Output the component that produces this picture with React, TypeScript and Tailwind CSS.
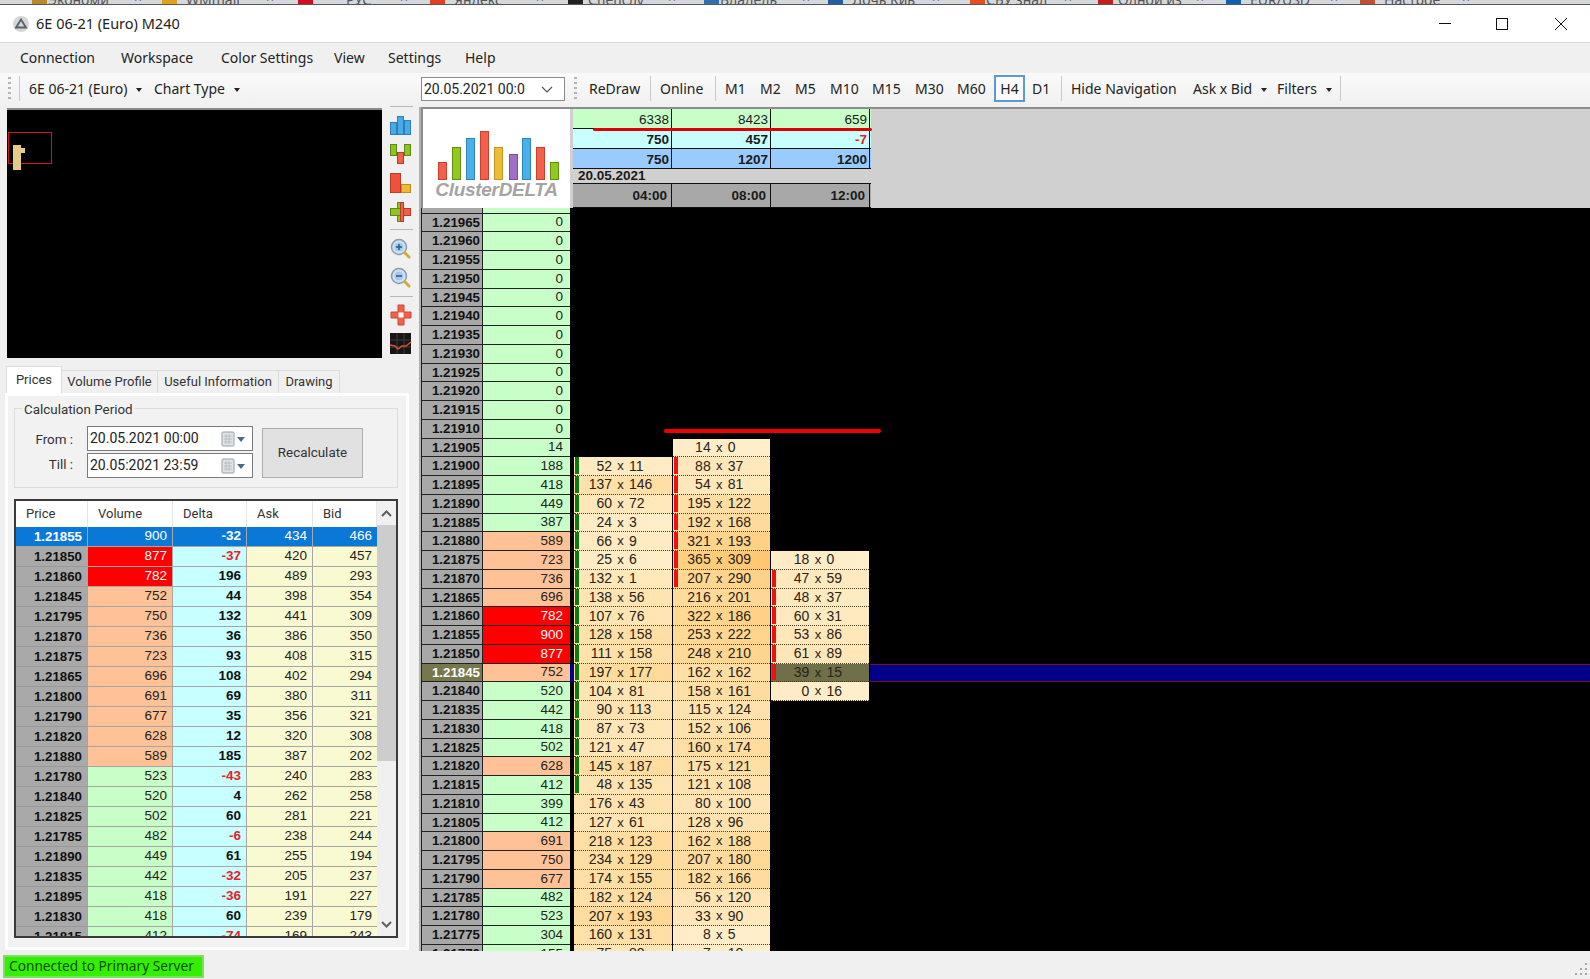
import { ReactNode } from 'react'

const SANS = "font-['Noto_Sans',sans-serif]"
const ROBOTO = "font-['Roboto',sans-serif]"
const ARIAL = "font-['Liberation_Sans',Arial,sans-serif]"

// Browser tabs peeking out above the window: icon x, label x, close x, label, icon colour
const BROWSER_TABS: [number, number, number, string, string][] = [
  [32, 48, 134, 'Экономи', '#b58a2a'],
  [162, 186, 266, 'WMmail', '#e0a020'],
  [298, 346, 400, 'РУС', '#d01020'],
  [430, 454, 536, 'Яндекс', '#e04020'],
  [568, 588, 668, 'Спецслу', '#222222'],
  [704, 720, 802, 'Владель', '#3070b0'],
  [828, 852, 932, 'Дочь Кив', '#2060a0'],
  [970, 986, 1064, 'СБУ знал', '#e05020'],
  [1098, 1118, 1196, 'Одной из', '#c02020'],
  [1226, 1250, 1330, 'EUR/USD', '#1060b0'],
  [1360, 1384, 1462, 'Настрое', '#c05030'],
]

// Grid on the Prices tab: price, volume, delta, ask, bid
const PRICE_ROWS: [string, number, number, number, number][] = [
  ['1.21855', 900, -32, 434, 466],
  ['1.21850', 877, -37, 420, 457],
  ['1.21860', 782, 196, 489, 293],
  ['1.21845', 752, 44, 398, 354],
  ['1.21795', 750, 132, 441, 309],
  ['1.21870', 736, 36, 386, 350],
  ['1.21875', 723, 93, 408, 315],
  ['1.21865', 696, 108, 402, 294],
  ['1.21800', 691, 69, 380, 311],
  ['1.21790', 677, 35, 356, 321],
  ['1.21820', 628, 12, 320, 308],
  ['1.21880', 589, 185, 387, 202],
  ['1.21780', 523, -43, 240, 283],
  ['1.21840', 520, 4, 262, 258],
  ['1.21825', 502, 60, 281, 221],
  ['1.21785', 482, -6, 238, 244],
  ['1.21890', 449, 61, 255, 194],
  ['1.21835', 442, -32, 205, 237],
  ['1.21895', 418, -36, 191, 227],
  ['1.21830', 418, 60, 239, 179],
  ['1.21815', 412, -74, 169, 243],
]

type Cluster = [number, number] | null

// Footprint ladder: price, total volume, three H4 columns
const LADDER: [string, number, Cluster, Cluster, Cluster][] = [
  ['1.21965', 0, null, null, null],
  ['1.21960', 0, null, null, null],
  ['1.21955', 0, null, null, null],
  ['1.21950', 0, null, null, null],
  ['1.21945', 0, null, null, null],
  ['1.21940', 0, null, null, null],
  ['1.21935', 0, null, null, null],
  ['1.21930', 0, null, null, null],
  ['1.21925', 0, null, null, null],
  ['1.21920', 0, null, null, null],
  ['1.21915', 0, null, null, null],
  ['1.21910', 0, null, null, null],
  ['1.21905', 14, null, [14, 0], null],
  ['1.21900', 188, [52, 11], [88, 37], null],
  ['1.21895', 418, [137, 146], [54, 81], null],
  ['1.21890', 449, [60, 72], [195, 122], null],
  ['1.21885', 387, [24, 3], [192, 168], null],
  ['1.21880', 589, [66, 9], [321, 193], null],
  ['1.21875', 723, [25, 6], [365, 309], [18, 0]],
  ['1.21870', 736, [132, 1], [207, 290], [47, 59]],
  ['1.21865', 696, [138, 56], [216, 201], [48, 37]],
  ['1.21860', 782, [107, 76], [322, 186], [60, 31]],
  ['1.21855', 900, [128, 158], [253, 222], [53, 86]],
  ['1.21850', 877, [111, 158], [248, 210], [61, 89]],
  ['1.21845', 752, [197, 177], [162, 162], [39, 15]],
  ['1.21840', 520, [104, 81], [158, 161], [0, 16]],
  ['1.21835', 442, [90, 113], [115, 124], null],
  ['1.21830', 418, [87, 73], [152, 106], null],
  ['1.21825', 502, [121, 47], [160, 174], null],
  ['1.21820', 628, [145, 187], [175, 121], null],
  ['1.21815', 412, [48, 135], [121, 108], null],
  ['1.21810', 399, [176, 43], [80, 100], null],
  ['1.21805', 412, [127, 61], [128, 96], null],
  ['1.21800', 691, [218, 123], [162, 188], null],
  ['1.21795', 750, [234, 129], [207, 180], null],
  ['1.21790', 677, [174, 155], [182, 166], null],
  ['1.21785', 482, [182, 124], [56, 120], null],
  ['1.21780', 523, [207, 193], [33, 90], null],
  ['1.21775', 304, [160, 131], [8, 5], null],
  ['1.21770', 155, [75, 80], [7, 10], null],
]

const CURRENT_PRICE = '1.21845'

function volumeBg(volume: number) {
  if (volume >= 770) return 'bg-[#ff0000] text-white'
  if (volume >= 580) return 'bg-[#ffc297] text-[#222]'
  return 'bg-[#c8ffc8] text-[#222]'
}

/** Cell tint grows with the traded volume, like the terminal's own shading. */
function clusterShade([ask, bid]: [number, number]) {
  const t = Math.min(1, (ask + bid) / 680)
  const g = Math.round(240 - 42 * t)
  const b = Math.round(205 - 95 * t)
  const g2 = Math.round(236 - 26 * t)
  const b2 = Math.round(200 - 70 * t)
  return `linear-gradient(90deg, rgb(255,${g2},${b2}), rgb(255,${g},${b}))`
}

function Caret() {
  return <span className="ml-[9px] inline-block h-0 w-0 border-x-[3.5px] border-t-[4px] border-x-transparent border-t-[#222] align-middle" />
}

function ToolSep({ className = '' }: { className?: string }) {
  return <div className={`h-[25px] w-px bg-[#c8c8c8] ${className}`} />
}

function Grip({ className = '' }: { className?: string }) {
  return (
    <div className={`flex h-[22px] w-[3px] flex-col justify-between ${className}`}>
      {[0, 1, 2, 3, 4].map((i) => (
        <span key={i} className="h-[2px] w-[3px] bg-[#b4b4b4]" />
      ))}
    </div>
  )
}

function ToolText({ w, children, className = '' }: { w: string; children: ReactNode; className?: string }) {
  return <span className={`shrink-0 whitespace-nowrap ${w} ${className}`}>{children}</span>
}

/** Bars in the vertical icon strip; each is a small coloured candle. */
function Bar({ x, y, w, h, c, b }: { x: number; y: number; w: number; h: number; c: string; b: string }) {
  return <rect x={x} y={y} width={w} height={h} fill={c} stroke={b} strokeWidth="1" />
}

function SideIcon({ children }: { children: ReactNode }) {
  return (
    <svg width="24" height="22" viewBox="0 0 24 22" className="shrink-0">
      {children}
    </svg>
  )
}

function Magnifier({ plus }: { plus: boolean }) {
  return (
    <SideIcon>
      <circle cx="10" cy="9" r="7.5" fill="#cfe2f3" stroke="#8a9aa8" strokeWidth="1.5" />
      <circle cx="10" cy="9" r="4.5" fill="#a6c8ea" />
      <rect x="7" y="8.2" width="6" height="1.6" fill="#2d5f9a" />
      {plus && <rect x="9.2" y="6" width="1.6" height="6" fill="#2d5f9a" />}
      <line x1="16" y1="15" x2="20" y2="19" stroke="#d9a93c" strokeWidth="3" strokeLinecap="round" />
    </SideIcon>
  )
}

function SideIcons() {
  return (
    <div className="-mt-[2px] flex h-full w-[38px] shrink-0 flex-col items-center">
      <div className="h-px w-[23px] bg-[#b8b8b8]" />
      <div className="mt-[7px] flex flex-col items-center gap-[7px]">
        <SideIcon>
          <Bar x={1.5} y={8.5} w={6} h={12} c="#45ace8" b="#2d7fb8" />
          <Bar x={8.5} y={2.5} w={6} h={18} c="#45ace8" b="#2d7fb8" />
          <Bar x={15.5} y={6.5} w={6} h={14} c="#45ace8" b="#2d7fb8" />
        </SideIcon>
        <SideIcon>
          <Bar x={1.5} y={1.5} w={6} h={11} c="#8fc31f" b="#5f8a12" />
          <Bar x={15.5} y={1.5} w={6} h={11} c="#8fc31f" b="#5f8a12" />
          <Bar x={8.5} y={9.5} w={6} h={11} c="#f0604a" b="#b83c2a" />
        </SideIcon>
        <SideIcon>
          <Bar x={1.5} y={1.5} w={10} h={19} c="#f0503c" b="#b83c2a" />
          <Bar x={12.5} y={12.5} w={9} h={8} c="#eebb33" b="#b88f20" />
        </SideIcon>
        <SideIcon>
          <Bar x={8.5} y={1.5} w={6} h={19} c="#8fc31f" b="#5f8a12" />
          <Bar x={1.5} y={7.5} w={20} h={7} c="#8fc31f" b="#5f8a12" />
          <Bar x={11.5} y={7.5} w={10} h={7} c="#f0604a" b="#b83c2a" />
          <Bar x={11.5} y={1.5} w={3} h={19} c="#f0604a" b="#b83c2a" />
        </SideIcon>
      </div>
      <div className="mt-[6px] h-px w-[23px] bg-[#b8b8b8]" />
      <div className="mt-[8px] flex flex-col items-center gap-[7px]">
        <Magnifier plus />
        <Magnifier plus={false} />
      </div>
      <div className="mt-[7px] h-px w-[23px] bg-[#b8b8b8]" />
      <div className="mt-[7px] flex flex-col items-center gap-[7px]">
        <SideIcon>
          <path d="M9 1h6v7h7v6h-7v7H9v-7H2V8h7z" fill="#f0604a" stroke="#c64a38" />
          <rect x="9.5" y="8.5" width="5" height="5" fill="#fff" />
        </SideIcon>
        <SideIcon>
          <rect x="1" y="0" width="21" height="21" fill="#151515" />
          <path d="M1 7h21M1 14h21M8 0v21M15 0v21" stroke="#3c3c3c" strokeWidth="1" />
          <path d="M1 12l5 1 3 3 4-3 4 0 5-4" fill="none" stroke="#e04a30" strokeWidth="1.5" />
        </SideIcon>
      </div>
    </div>
  )
}

function ClusterLogo() {
  const bars: [number, number, string, string][] = [
    [15, 17, '#f2604c', '#c9402f'],
    [29, 32, '#93c91f', '#5f8f12'],
    [43, 41, '#4ab0ea', '#2e84bb'],
    [57, 48, '#f2604c', '#c9402f'],
    [71, 32, '#efbd35', '#c29520'],
    [86, 25, '#a26fc6', '#7b4f9e'],
    [99, 41, '#4ab0ea', '#2e84bb'],
    [113, 32, '#f2604c', '#c9402f'],
    [127, 17, '#93c91f', '#5f8f12'],
  ]
  return (
    <div className="flex h-[99px] w-[147px] shrink-0 flex-col items-center bg-white">
      <svg width="147" height="68" viewBox="0 0 147 68" className="mt-[3px] shrink-0">
        {bars.map(([x, h, c, b]) => (
          <rect key={x} x={x + 0.5} y={67.5 - h} width={8} height={h} fill={c} stroke={b} strokeWidth="1" />
        ))}
      </svg>
      <span className={`${ARIAL} text-[19px] leading-[20px] font-bold tracking-[-0.3px] text-[#a4a4a4] italic`}>ClusterDELTA</span>
    </div>
  )
}

function HeaderRow({ values, bg, bold, neg }: { values: string[]; bg: string; bold?: boolean; neg?: boolean }) {
  return (
    <div className={`flex h-[20px] ${bg} border-b border-[#111]`}>
      {values.map((v, i) => (
        <div
          key={i}
          className={`w-[99px] border-r border-[#111] pr-[2px] text-right text-[13.5px] leading-[21px] ${bold ? 'font-bold' : ''} ${
            neg && v.startsWith('-') ? 'text-[#f01818]' : 'text-[#1a1a1a]'
          }`}
        >
          {v}
        </div>
      ))}
    </div>
  )
}

function ClusterCell({ cluster, mark, dim }: { cluster: Cluster; mark?: string; dim?: boolean }) {
  if (!cluster) return <div className="mr-px w-[97.7px] shrink-0" />
  const [ask, bid] = cluster
  return (
    <div
      className={`relative mr-px flex h-full w-[97.7px] shrink-0 items-center border-b border-dotted border-[#4a3a20] text-[14px] text-[#2a2216] ${
        dim ? 'bg-[#6f6f4a]' : ''
      }`}
      style={dim ? undefined : { background: clusterShade(cluster) }}
    >
      {mark && <span className={`absolute top-0 bottom-px left-[1px] w-[4px] ${mark}`} />}
      <span className="w-[38px] shrink-0 text-right">{ask}</span>
      <span className="w-[17px] shrink-0 text-center text-[13px]">x</span>
      <span className="shrink-0">{bid}</span>
    </div>
  )
}

function FootprintLadder() {
  return (
    <div className={`${ARIAL} relative min-h-0 flex-1 overflow-hidden bg-black`}>
      {/* row scrolled almost out of view above 1.21965 */}
      <div className="flex h-[5.6px]">
        <div className="w-[62px] shrink-0 border-r border-b border-l border-[#222] bg-[#a8a8a8]" />
        <div className="w-[87px] shrink-0 border-b border-[#222] bg-[#c8ffc8]" />
      </div>
      {LADDER.map(([price, volume, c1, c2, c3]) => {
        const current = price === CURRENT_PRICE
        const p = Number(price)
        return (
          <div key={price} className="flex h-[18.75px]">
            <div
              className={`flex w-[62px] shrink-0 items-center justify-end border-r border-b border-l border-[#222] pr-[2px] text-[13.3px] font-bold ${
                current ? 'bg-[#77774e] text-white' : 'bg-[#a8a8a8] text-[#111]'
              }`}
            >
              {price}
            </div>
            <div className={`flex w-[87px] shrink-0 items-center justify-end border-b border-[#222] pr-[7px] text-[13.5px] ${volumeBg(volume)}`}>{volume}</div>
            <div className={`h-full w-[4px] shrink-0 ${current ? 'bg-[#00008b]' : ''}`} />
            <ClusterCell cluster={c1} mark={p >= 1.21815 && p <= 1.219 ? 'bg-[#0a7a12]' : undefined} />
            <ClusterCell cluster={c2} mark={p >= 1.2187 && p <= 1.219 ? 'bg-[#f01010]' : undefined} />
            <ClusterCell cluster={c3} mark={p >= 1.21845 && p <= 1.2187 ? 'bg-[#f01010]' : undefined} dim={current} />
            {current && <div className="h-full flex-1 border-y border-[#7a1020] bg-[#00008b]" />}
          </div>
        )
      })}
      {/* hand-drawn level line on the chart */}
      <div className="absolute top-[221px] left-[243px] h-[3.5px] w-[217px] rounded-full bg-[#f00000]" />
    </div>
  )
}

function CalendarPicker({ value }: { value: string }) {
  return (
    <div className={`${ROBOTO} flex h-[25px] w-[166px] items-center border border-[#7a7a7a] bg-white pl-[2px] text-[14px] text-[#222]`}>
      <span className="w-[131px] shrink-0 whitespace-nowrap">{value}</span>
      <svg width="26" height="16" viewBox="0 0 26 16" className="shrink-0">
        <rect x="1" y="1" width="12" height="14" rx="1" fill="#dfe3e6" stroke="#9aa0a5" />
        <path d="M3 5h8M3 8h8M3 11h8M5 3v10M8 3v10" stroke="#b2b8bd" strokeWidth="0.8" />
        <path d="M16 6h8l-4 5z" fill="#4a6a8a" />
      </svg>
    </div>
  )
}

function ChevronGlyph({ up }: { up?: boolean }) {
  return (
    <svg width="11" height="7" viewBox="0 0 11 7">
      <path d={up ? 'M1 6l4.5-4.5L10 6' : 'M1 1l4.5 4.5L10 1'} fill="none" stroke="#606060" strokeWidth="2" />
    </svg>
  )
}

function PricesGrid() {
  const cols = ['w-[72px]', 'w-[85px]', 'w-[74px]', 'w-[66px]', 'w-[64px]']
  return (
    <div className={`${ARIAL} relative mx-[3px] mt-[11px] h-[439px] w-[384px] shrink-0 overflow-hidden border-2 border-[#3a3a3a] bg-white`}>
      <div className="flex">
        <div className="w-[361px] shrink-0">
          <div className={`${ROBOTO} flex h-[26px] items-center bg-white text-[13px] text-[#333]`}>
            {['Price', 'Volume', 'Delta', 'Ask', 'Bid'].map((h, i) => (
              <div key={h} className={`${cols[i]} flex h-full items-center border-r border-[#e6e6e6] pl-[10px]`}>
                {h}
              </div>
            ))}
          </div>
          {PRICE_ROWS.map(([price, volume, delta, ask, bid], i) => {
            const selected = i === 0
            const cell = 'flex h-full items-center justify-end border-r border-b border-[#a6a6a6] pr-[5px]'
            return (
              <div key={price} className="flex h-[20px] text-[13.5px]">
                <div className={`${cols[0]} ${cell} text-[13.3px] font-bold ${selected ? 'bg-[#0a78d7] text-white' : 'border-b-[#999] bg-[#a9a9a9] text-[#111]'}`}>{price}</div>
                <div className={`${cols[1]} ${cell} ${selected ? 'bg-[#0a78d7] text-white' : volumeBg(volume)}`}>{volume}</div>
                <div className={`${cols[2]} ${cell} font-bold ${selected ? 'bg-[#0a78d7] text-white' : `bg-[#c8ffff] ${delta < 0 ? 'text-[#ef1a2a]' : 'text-[#111]'}`}`}>{delta}</div>
                <div className={`${cols[3]} ${cell} ${selected ? 'bg-[#0a78d7] text-white' : 'bg-[#fafad2] text-[#222]'}`}>{ask}</div>
                <div className={`${cols[4]} ${cell} border-r-0 ${selected ? 'bg-[#0a78d7] text-white' : 'bg-[#fafad2] text-[#222]'}`}>{bid}</div>
              </div>
            )
          })}
        </div>
        <div className="flex h-[435px] w-[19px] shrink-0 flex-col items-center bg-[#f0f0f0]">
          <div className="flex h-[24px] shrink-0 items-center"><ChevronGlyph up /></div>
          <div className="h-[236px] w-full shrink-0 bg-[#cdcdcd]" />
          <div className="mt-auto flex h-[24px] shrink-0 items-center"><ChevronGlyph /></div>
        </div>
      </div>
    </div>
  )
}

function NavigationPanel() {
  return (
    <div className="flex w-[419px] shrink-0 flex-col">
      <div className="flex h-[261px] shrink-0 pt-[1px] pl-[7px]">
        <div className="relative h-[250px] w-[375px] shrink-0 border-t-2 border-[#8a8a8a] bg-black">
          <div className="absolute top-[22px] left-[1px] h-[32px] w-[44px] border border-[#d01818]" />
          <div className="absolute top-[35px] left-[6px] h-[25px] w-[8px] bg-[#e7c98a]" />
          <div className="absolute top-[38px] left-[14px] h-[5px] w-[4px] bg-[#e7c98a]" />
        </div>
        <SideIcons />
      </div>

      <div className={`${ROBOTO} flex h-[25px] shrink-0 items-end pl-[6px] text-[13px] whitespace-nowrap text-[#333]`}>
        <div className="flex h-[27px] w-[56px] items-center justify-center border border-b-0 border-[#dcdcdc] bg-white">Prices</div>
        <div className="flex h-[23px] w-[96px] items-center justify-center border-t border-r border-[#dcdcdc] bg-[#f0f0f0]">Volume Profile</div>
        <div className="flex h-[23px] w-[121px] items-center justify-center border-t border-r border-[#dcdcdc] bg-[#f0f0f0]">Useful Information</div>
        <div className="flex h-[23px] w-[61px] items-center justify-center border-t border-r border-[#dcdcdc] bg-[#f0f0f0]">Drawing</div>
      </div>

      <div className="ml-[5px] flex h-[557px] w-[404px] shrink-0 flex-col border-[3px] border-white bg-[#f2f2f2] pt-[12px] pl-[3px]">
        <div className={`${ROBOTO} relative ml-[3px] h-[80px] w-[384px] shrink-0 border border-[#dcdcdc] text-[13.4px] text-[#333]`}>
          <span className="absolute -top-[9px] left-[7px] bg-[#f2f2f2] px-[2px]">Calculation Period</span>
          <div className="flex h-full items-start pt-[17px] pl-[21px]">
            <div className="mt-[2px] flex w-[51px] shrink-0 flex-col items-end gap-[1px] pr-[14px] text-right">
              <span className="flex h-[24px] items-center whitespace-nowrap">From :</span>
              <span className="flex h-[24px] items-center whitespace-nowrap">Till :</span>
            </div>
            <div className="flex flex-col gap-[2px]">
              <CalendarPicker value="20.05.2021 00:00" />
              <CalendarPicker value="20.05:2021 23:59" />
            </div>
            <div className="mt-[2px] ml-[9px] flex h-[50px] w-[101px] shrink-0 items-center justify-center border border-[#adadad] bg-[#e1e1e1]">Recalculate</div>
          </div>
        </div>
        <PricesGrid />
      </div>
    </div>
  )
}

export default function App() {
  return (
    <div className={`${SANS} flex h-[979px] w-[1590px] flex-col overflow-hidden bg-[#f0f0f0] text-[#222]`}>
      {/* browser tabs behind the window, nearly all clipped */}
      <div className="relative h-[5px] shrink-0 overflow-hidden border-b border-[#555] bg-[#d6d9dc] text-[14px] text-[#555]">
        {BROWSER_TABS.map(([x, textX, closeX, label, color]) => (
          <div key={x}>
            <span className="absolute -top-[11px] h-[15px] w-[15px]" style={{ left: x, backgroundColor: color }} />
            <span className="absolute -top-[11px] whitespace-nowrap" style={{ left: textX }}>{label}</span>
            <span className="absolute -top-[13px]" style={{ left: closeX }}>×</span>
          </div>
        ))}
      </div>

      <div className="flex h-[38px] shrink-0 items-center border-b border-[#d8d8d8] bg-white pl-[13px] text-[14.5px]">
        <svg width="16" height="16" viewBox="0 0 16 16" className="shrink-0">
          <circle cx="8" cy="8" r="8" fill="#d6d6d6" />
          <path d="M8 3.5L13 11.5H3z" fill="none" stroke="#54606a" strokeWidth="1.8" />
        </svg>
        <span className="ml-[7px]">6E 06-21 (Euro) M240</span>
        <div className="ml-auto flex h-full items-center">
          <svg width="60" height="38" viewBox="0 0 60 38" className="mr-[-2px]"><path d="M23 18.5h12" stroke="#111" /></svg>
          <svg width="58" height="38" viewBox="0 0 58 38"><rect x="22.5" y="13.5" width="11" height="11" fill="none" stroke="#111" /></svg>
          <svg width="58" height="38" viewBox="0 0 58 38"><path d="M23 13l12 12M35 13L23 25" stroke="#111" /></svg>
        </div>
      </div>

      <div className="flex h-[30px] shrink-0 items-center pb-[2px] pl-[20px] text-[14px]">
        <span className="w-[101px] shrink-0">Connection</span>
        <span className="w-[100px] shrink-0">Workspace</span>
        <span className="w-[113px] shrink-0">Color Settings</span>
        <span className="w-[54px] shrink-0">View</span>
        <span className="w-[77px] shrink-0">Settings</span>
        <span>Help</span>
      </div>

      <div className="flex h-[34px] shrink-0 items-center bg-linear-to-b from-[#fafafa] to-[#f0f0f0] pb-[4px] text-[14px]">
        <Grip className="ml-[8px]" />
        <ToolSep className="ml-[8px]" />
        <ToolText w="ml-[9px] w-[112px]">6E 06-21 (Euro)<Caret /></ToolText>
        <ToolText w="ml-[13px] w-[94px]">Chart Type<Caret /></ToolText>
        <div className={`${ROBOTO} mt-[2px] ml-[173px] flex h-[24px] w-[144px] shrink-0 items-center border border-[#8a8a8a] bg-white pl-[2px]`}>
          <span className="w-[116px] shrink-0 overflow-hidden whitespace-nowrap">20.05.2021 00:0</span>
          <svg width="12" height="7" viewBox="0 0 12 7" className="ml-[1px] shrink-0"><path d="M1 1l5 5 5-5" fill="none" stroke="#555" strokeWidth="1.2" /></svg>
        </div>
        <Grip className="ml-[9px]" />
        <ToolText w="ml-[12px] w-[50px]">ReDraw</ToolText>
        <ToolSep className="ml-[11px]" />
        <ToolText w="ml-[9px] w-[44px]">Online</ToolText>
        <ToolSep className="ml-[11px]" />
        <ToolText w="ml-[9px] w-[24px]">M1</ToolText>
        <ToolText w="ml-[11px] w-[24px]">M2</ToolText>
        <ToolText w="ml-[11px] w-[24px]">M5</ToolText>
        <ToolText w="ml-[11px] w-[32px]">M10</ToolText>
        <ToolText w="ml-[10px] w-[32px]">M15</ToolText>
        <ToolText w="ml-[11px] w-[32px]">M30</ToolText>
        <ToolText w="ml-[10px] w-[32px]">M60</ToolText>
        <span className="ml-[5px] flex h-[27px] w-[31px] shrink-0 items-center justify-center border-2 border-[#5b9bd5] bg-[#fafafa]">H4</span>
        <ToolText w="ml-[7px] w-[22px]">D1</ToolText>
        <ToolSep className="ml-[7px]" />
        <ToolText w="ml-[9px] w-[112px]">Hide Navigation</ToolText>
        <ToolText w="ml-[10px] w-[75px]">Ask x Bid<Caret /></ToolText>
        <ToolText w="ml-[9px] w-[54px]">Filters<Caret /></ToolText>
        <ToolSep className="ml-[9px]" />
      </div>

      <div className="flex h-[844px] shrink-0">
        <NavigationPanel />
        <div className="w-[2px] shrink-0 bg-[#b0b0b0]" />
        <div className="flex min-w-0 flex-1 flex-col">
          <div className="flex h-[101px] shrink-0 border-t-2 border-l-2 border-[#8c8c8c] bg-[#d0d0d0]">
            <ClusterLogo />
            <div className={`${ARIAL} relative ml-[3px] w-[298px] shrink-0`}>
              <HeaderRow values={['6338', '8423', '659']} bg="bg-[#c8ffc8]" />
              <HeaderRow values={['750', '457', '-7']} bg="bg-[#c8ffff]" bold neg />
              <HeaderRow values={['750', '1207', '1200']} bg="bg-[#9acbff]" bold />
              <div className="h-[14px] pl-[5px] text-[13.5px] leading-[14px] font-bold text-[#1a1a1a]">20.05.2021</div>
              <div className="flex h-[25px] border-y border-[#111] bg-[#a8a8a8]">
                {['04:00', '08:00', '12:00'].map((t) => (
                  <div key={t} className="w-[99px] border-r border-[#111] pr-[4px] text-right text-[13.5px] leading-[23px] font-bold text-[#1a1a1a]">
                    {t}
                  </div>
                ))}
              </div>
              <div className="absolute top-[19px] left-[20px] h-[3px] w-[279px] rounded-full bg-[#e00000]" />
            </div>
          </div>
          <FootprintLadder />
        </div>
      </div>

      <div className="flex min-h-0 flex-1 items-end pb-px pl-[3px]">
        <div className="flex h-[23px] w-[201px] items-center border-2 border-[#7fe060] bg-[#33f000] pl-[4px] text-[13.7px] whitespace-nowrap text-[#064a06]">
          Connected to Primary Server
        </div>
        <svg width="14" height="14" viewBox="0 0 14 14" className="mr-[2px] mb-[2px] ml-auto shrink-0">
          <path d="M11 1h2v2h-2zM6 6h2v2H6zM11 6h2v2h-2zM1 11h2v2H1zM6 11h2v2H6zM11 11h2v2h-2z" fill="#a8a8a8" />
        </svg>
      </div>
    </div>
  )
}
